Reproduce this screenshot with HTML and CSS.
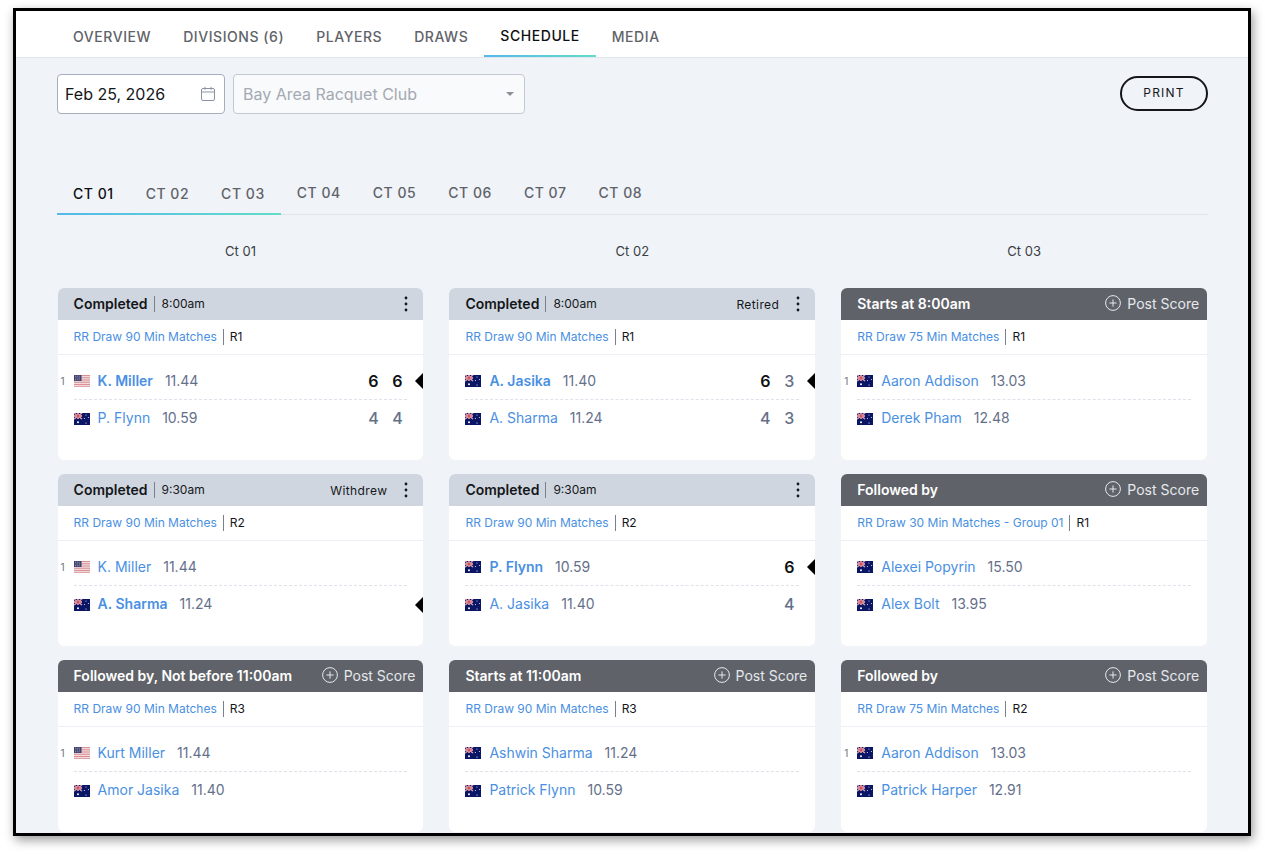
FILE: index.html
```html
<!DOCTYPE html>
<html lang="en">
<head>
<meta charset="utf-8">
<title>Schedule</title>
<link rel="stylesheet" href="styles.css">
</head>
<body>
<svg class="defs" width="0" height="0" aria-hidden="true">
  <symbol id="us" viewBox="0 0 16 12">
    <rect width="16" height="12" fill="#f4ecec"/>
    <path d="M0 .5h16M0 2.3h16M0 4.1h16M0 5.9h16M0 7.7h16M0 9.5h16M0 11.3h16" stroke="#d9868a" stroke-width=".9"/>
    <rect width="7.5" height="6" fill="#3b3f6b"/>
    <path d="M1 1.2h5.5M1.5 3h5M1 4.8h5.5" stroke="#c9cbdc" stroke-width=".7" stroke-dasharray="1 .8"/>
  </symbol>
  <symbol id="au" viewBox="0 0 16 12">
    <rect width="16" height="12" fill="#0b1566"/>
    <path d="M0 0l8 6M8 0L0 6" stroke="#e8e8f0" stroke-width="1.2"/>
    <path d="M0 0l8 6M8 0L0 6" stroke="#c8263c" stroke-width=".5"/>
    <path d="M4 0v6M0 3h8" stroke="#e8e8f0" stroke-width="2"/>
    <path d="M4 0v6M0 3h8" stroke="#c8263c" stroke-width="1.1"/>
    <circle cx="4" cy="9.2" r="1" fill="#fff"/>
    <circle cx="12" cy="2" r=".5" fill="#fff"/>
    <circle cx="14.4" cy="4.6" r=".5" fill="#fff"/>
    <circle cx="10.4" cy="5.4" r=".5" fill="#fff"/>
    <circle cx="12" cy="10" r=".6" fill="#fff"/>
  </symbol>
  <symbol id="dots" viewBox="0 0 4 16">
    <circle cx="2" cy="2" r="1.4"/><circle cx="2" cy="8" r="1.4"/><circle cx="2" cy="14" r="1.4"/>
  </symbol>
  <symbol id="plus" viewBox="0 0 16 16">
    <circle cx="8" cy="8" r="7.4" fill="none" stroke="currentColor"/>
    <path d="M8 4.4v7.2M4.4 8h7.2" stroke="currentColor" fill="none"/>
  </symbol>
</svg>

<div class="frame">
  <nav class="topnav">
    <a class="tab">OVERVIEW</a>
    <a class="tab">DIVISIONS (6)</a>
    <a class="tab">PLAYERS</a>
    <a class="tab">DRAWS</a>
    <a class="tab tab-active">SCHEDULE</a>
    <a class="tab">MEDIA</a>
  </nav>

  <main class="content">
    <div class="toolbar">
      <div class="date-field">
        <span>Feb 25, 2026</span>
        <svg class="cal" width="16" height="16" viewBox="0 0 16 16" fill="none" stroke="#8b93a3"><rect x="1.5" y="2.5" width="13" height="12" rx="1.5"/><path d="M1.5 6h13M5 .8v3M11 .8v3"/></svg>
      </div>
      <div class="select-field">
        <span>Bay Area Racquet Club</span>
        <i class="caret"></i>
      </div>
      <button class="print">PRINT</button>
    </div>

    <div class="court-tabs">
      <div class="court-group">
        <a class="court court-active">CT 01</a>
        <a class="court">CT 02</a>
        <a class="court">CT 03</a>
      </div>
      <a class="court">CT 04</a>
      <a class="court">CT 05</a>
      <a class="court">CT 06</a>
      <a class="court">CT 07</a>
      <a class="court">CT 08</a>
    </div>

    <div class="col-titles">
      <div>Ct 01</div>
      <div>Ct 02</div>
      <div>Ct 03</div>
    </div>

    <div class="cards">

      <article class="card">
        <header class="head head-done">
          <b>Completed</b><span class="time">8:00am</span>
          <span class="spacer"></span>
          <svg class="dots"><use href="#dots"/></svg>
        </header>
        <div class="meta"><a>RR Draw 90 Min Matches</a><span>R1</span></div>
        <div class="rows">
          <div class="row"><span class="seed">1</span><svg class="flag"><use href="#us"/></svg><a class="name win">K. Miller</a><span class="rating">11.44</span><span class="scores win-s"><i>6</i><i>6</i></span><span class="marker"></span></div>
          <div class="row"><svg class="flag"><use href="#au"/></svg><a class="name">P. Flynn</a><span class="rating">10.59</span><span class="scores"><i>4</i><i>4</i></span></div>
        </div>
      </article>

      <article class="card">
        <header class="head head-done">
          <b>Completed</b><span class="time">8:00am</span>
          <span class="spacer"></span>
          <span class="status">Retired</span>
          <svg class="dots"><use href="#dots"/></svg>
        </header>
        <div class="meta"><a>RR Draw 90 Min Matches</a><span>R1</span></div>
        <div class="rows">
          <div class="row"><svg class="flag"><use href="#au"/></svg><a class="name win">A. Jasika</a><span class="rating">11.40</span><span class="scores"><i class="hi">6</i><i>3</i></span><span class="marker"></span></div>
          <div class="row"><svg class="flag"><use href="#au"/></svg><a class="name">A. Sharma</a><span class="rating">11.24</span><span class="scores"><i>4</i><i>3</i></span></div>
        </div>
      </article>

      <article class="card">
        <header class="head head-next">
          <b>Starts at 8:00am</b>
          <span class="spacer"></span>
          <span class="post"><svg class="plus"><use href="#plus"/></svg>Post Score</span>
        </header>
        <div class="meta"><a>RR Draw 75 Min Matches</a><span>R1</span></div>
        <div class="rows">
          <div class="row"><span class="seed">1</span><svg class="flag"><use href="#au"/></svg><a class="name">Aaron Addison</a><span class="rating">13.03</span></div>
          <div class="row"><svg class="flag"><use href="#au"/></svg><a class="name">Derek Pham</a><span class="rating">12.48</span></div>
        </div>
      </article>

      <article class="card">
        <header class="head head-done">
          <b>Completed</b><span class="time">9:30am</span>
          <span class="spacer"></span>
          <span class="status">Withdrew</span>
          <svg class="dots"><use href="#dots"/></svg>
        </header>
        <div class="meta"><a>RR Draw 90 Min Matches</a><span>R2</span></div>
        <div class="rows">
          <div class="row"><span class="seed">1</span><svg class="flag"><use href="#us"/></svg><a class="name">K. Miller</a><span class="rating">11.44</span></div>
          <div class="row"><svg class="flag"><use href="#au"/></svg><a class="name win">A. Sharma</a><span class="rating">11.24</span><span class="marker"></span></div>
        </div>
      </article>

      <article class="card">
        <header class="head head-done">
          <b>Completed</b><span class="time">9:30am</span>
          <span class="spacer"></span>
          <svg class="dots"><use href="#dots"/></svg>
        </header>
        <div class="meta"><a>RR Draw 90 Min Matches</a><span>R2</span></div>
        <div class="rows">
          <div class="row"><svg class="flag"><use href="#au"/></svg><a class="name win">P. Flynn</a><span class="rating">10.59</span><span class="scores"><i class="hi">6</i></span><span class="marker"></span></div>
          <div class="row"><svg class="flag"><use href="#au"/></svg><a class="name">A. Jasika</a><span class="rating">11.40</span><span class="scores"><i>4</i></span></div>
        </div>
      </article>

      <article class="card">
        <header class="head head-next">
          <b>Followed by</b>
          <span class="spacer"></span>
          <span class="post"><svg class="plus"><use href="#plus"/></svg>Post Score</span>
        </header>
        <div class="meta"><a>RR Draw 30 Min Matches - Group 01</a><span>R1</span></div>
        <div class="rows">
          <div class="row"><svg class="flag"><use href="#au"/></svg><a class="name">Alexei Popyrin</a><span class="rating">15.50</span></div>
          <div class="row"><svg class="flag"><use href="#au"/></svg><a class="name">Alex Bolt</a><span class="rating">13.95</span></div>
        </div>
      </article>

      <article class="card">
        <header class="head head-next">
          <b>Followed by, Not before 11:00am</b>
          <span class="spacer"></span>
          <span class="post"><svg class="plus"><use href="#plus"/></svg>Post Score</span>
        </header>
        <div class="meta"><a>RR Draw 90 Min Matches</a><span>R3</span></div>
        <div class="rows">
          <div class="row"><span class="seed">1</span><svg class="flag"><use href="#us"/></svg><a class="name">Kurt Miller</a><span class="rating">11.44</span></div>
          <div class="row"><svg class="flag"><use href="#au"/></svg><a class="name">Amor Jasika</a><span class="rating">11.40</span></div>
        </div>
      </article>

      <article class="card">
        <header class="head head-next">
          <b>Starts at 11:00am</b>
          <span class="spacer"></span>
          <span class="post"><svg class="plus"><use href="#plus"/></svg>Post Score</span>
        </header>
        <div class="meta"><a>RR Draw 90 Min Matches</a><span>R3</span></div>
        <div class="rows">
          <div class="row"><svg class="flag"><use href="#au"/></svg><a class="name">Ashwin Sharma</a><span class="rating">11.24</span></div>
          <div class="row"><svg class="flag"><use href="#au"/></svg><a class="name">Patrick Flynn</a><span class="rating">10.59</span></div>
        </div>
      </article>

      <article class="card">
        <header class="head head-next">
          <b>Followed by</b>
          <span class="spacer"></span>
          <span class="post"><svg class="plus"><use href="#plus"/></svg>Post Score</span>
        </header>
        <div class="meta"><a>RR Draw 75 Min Matches</a><span>R2</span></div>
        <div class="rows">
          <div class="row"><span class="seed">1</span><svg class="flag"><use href="#au"/></svg><a class="name">Aaron Addison</a><span class="rating">13.03</span></div>
          <div class="row"><svg class="flag"><use href="#au"/></svg><a class="name">Patrick Harper</a><span class="rating">12.91</span></div>
        </div>
      </article>

    </div>
  </main>
</div>
</body>
</html>
```

FILE: styles.css
```css
* { box-sizing: border-box; }

html, body { height: 100%; }

body {
  margin: 0;
  padding: 8px 0 0 13px;
  background: #fff;
  font-family: Inter, "Liberation Sans", sans-serif;
  color: #14161a;
  overflow: hidden;
}

.defs { position: absolute; }

.frame {
  width: 1238px;
  height: 828px;
  border: 3px solid #000;
  background: #f0f3f8;
  box-shadow: 2px 4px 10px rgba(0, 0, 0, .4);
  overflow: hidden;
}

/* top nav */
.topnav {
  display: flex;
  height: 47px;
  padding-left: 41px;
  background: #fff;
  border-bottom: 1px solid #e2e6ee;
}

.tab {
  display: block;
  height: 46px;
  padding: 17px 16px 0;
  font-size: 14px;
  line-height: 17px;
  font-weight: 500;
  letter-spacing: .56px;
  color: #5f6369;
}

.tab-active {
  padding-top: 16px;
  color: #0d0f12;
  border-bottom: 2px solid transparent;
  border-image: linear-gradient(90deg, #55b8ea, #62dcc8) 1;
}

/* page */
.content { padding: 16px 40px 0 41px; }

.toolbar {
  display: flex;
  align-items: flex-start;
  gap: 8px;
  height: 40px;
}

.date-field,
.select-field {
  display: flex;
  align-items: center;
  justify-content: space-between;
  height: 40px;
  border-radius: 4px;
  font-size: 16px;
}

.date-field {
  width: 168px;
  padding: 0 8px 0 7px;
  background: #fff;
  border: 1px solid #a6aebd;
  color: #14161a;
}

.select-field {
  width: 292px;
  padding: 0 10px 0 9px;
  background: #f8fafc;
  border: 1px solid #c3c9d4;
  color: #a4a9b2;
}

.caret {
  width: 0;
  height: 0;
  border-left: 4px solid transparent;
  border-right: 4px solid transparent;
  border-top: 4px solid #8b8f96;
}

.print {
  margin: 2px 0 0 auto;
  width: 88px;
  height: 35px;
  padding: 0 0 2px;
  border: 2px solid #14161a;
  border-radius: 18px;
  background: transparent;
  color: #14161a;
  font-family: inherit;
  font-size: 12px;
  letter-spacing: 1.2px;
}

/* courts */
.court-tabs {
  display: flex;
  margin-top: 59px;
  height: 42px;
  border-bottom: 1px solid #dfe3ea;
}

.court-group {
  display: flex;
  height: 42px;
  border-bottom: 2px solid transparent;
  border-image: linear-gradient(90deg, #55b8ea, #62dcc8) 1;
}

.court {
  display: block;
  padding: 11px 16px 0;
  font-size: 14px;
  line-height: 17px;
  font-weight: 500;
  letter-spacing: .53px;
  color: #5f6369;
}

.court-group .court { padding-top: 12px; }

.court-active { color: #0d0f12; }

.col-titles {
  display: grid;
  grid-template-columns: repeat(3, 1fr);
  column-gap: 26px;
  padding: 0 .9px 0 .6px;
  margin-top: 28px;
  height: 45px;
  text-align: center;
  font-size: 13px;
  line-height: 16px;
  color: #3a3d43;
}

.cards {
  display: grid;
  grid-template-columns: repeat(3, 1fr);
  gap: 14px 26px;
  padding: 0 .9px 0 .6px;
}

/* card */
.card {
  position: relative;
  height: 172px;
  background: #fff;
  border-radius: 6px;
  overflow: hidden;
}

.head {
  display: flex;
  align-items: center;
  height: 32px;
  padding: 0 8px 0 16px;
  font-size: 14px;
  line-height: 17px;
}

.head b {
  margin-bottom: 2px;
  font-weight: 600;
}

.head-done { background: #d0d6e0; color: #14161a; }

.head-next { background: #5f6369; color: #fff; }

.spacer { flex: 1; }

.time {
  margin-left: 6px;
  padding-left: 7px;
  border-left: 1px solid #7a808c;
  font-size: 12px;
  line-height: 16px;
}

.status {
  margin-right: 17px;
  font-size: 12px;
  letter-spacing: .4px;
}

.dots {
  width: 4px;
  height: 16px;
  margin-right: 7px;
  fill: #14161a;
}

.post {
  display: flex;
  align-items: center;
  gap: 6px;
  margin-bottom: 2px;
  color: #e6e8ec;
  font-size: 14px;
}

.plus { width: 16px; height: 16px; }

.meta {
  display: flex;
  align-items: center;
  height: 35px;
  padding: 0 16px;
  border-bottom: 1px solid #eceff4;
  font-size: 12px;
  line-height: 16px;
}

.meta a { color: #4a90e2; }

.meta span {
  margin-left: 6px;
  padding-left: 6px;
  border-left: 1px solid #7a808c;
  color: #14161a;
}

.rows { padding: 8px 16px 0; }

.row {
  position: relative;
  display: flex;
  align-items: center;
  height: 37px;
  font-size: 14px;
  line-height: 17px;
}

.row:first-child { border-bottom: 1px dashed #dfe2ea; }

.seed {
  position: absolute;
  left: -13px;
  font-size: 10px;
  color: #6b7280;
}

.flag {
  flex: none;
  width: 16px;
  height: 12px;
  margin-right: 8px;
}

.name {
  margin-bottom: 2px;
  color: #4a90e2;
}

.name.win { font-weight: 600; }

.rating {
  margin: 0 0 2px 12px;
  color: #64708a;
}

.scores {
  display: flex;
  gap: 4px;
  margin-left: auto;
  font-size: 16px;
  color: #64708a;
}

.scores i {
  width: 20px;
  text-align: center;
  font-style: normal;
  font-weight: 500;
}

.win-s i, .scores i.hi {
  color: #0d0f12;
  font-weight: 600;
}

.marker {
  position: absolute;
  right: -16px;
  top: 50%;
  margin-top: -8px;
  width: 0;
  height: 0;
  border-top: 8px solid transparent;
  border-bottom: 8px solid transparent;
  border-right: 8px solid #000;
}
```
